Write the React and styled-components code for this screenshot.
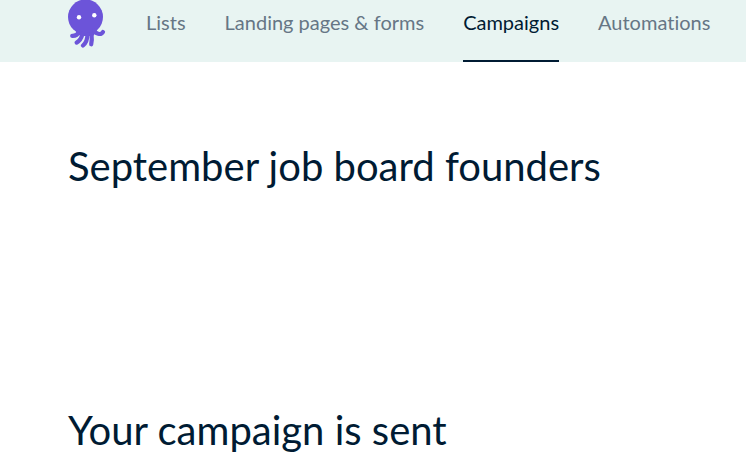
import React from 'react';
import styled, { createGlobalStyle } from 'styled-components';

const GlobalStyle = createGlobalStyle`
  * {
    box-sizing: border-box;
  }

  body {
    margin: 0;
    background: #ffffff;
    color: #001b33;
    font-family: Lato, 'Noto Sans', sans-serif;
    font-variant-ligatures: none;
  }
`;

const Header = styled.header`
  display: flex;
  align-items: flex-start;
  height: 62px;
  padding: 0 32px 0 68px;
  background: #e8f4f2;
  overflow: hidden;
`;

const LogoLink = styled.a`
  display: block;
  flex: none;
  width: 38px;
  height: 48px;
  margin-right: 40px;
`;

const Nav = styled.nav`
  display: flex;
  align-self: stretch;
  gap: 39px;
`;

const NavLink = styled.a`
  padding-top: 10px;
  border-bottom: 2px solid ${props => props.$active ? '#001b33' : 'transparent'};
  color: ${props => props.$active ? '#001b33' : '#667685'};
  font-size: 20px;
  line-height: 24px;
  text-decoration: none;
  white-space: nowrap;
`;

const Main = styled.main`
  display: flex;
  flex-direction: column;
  gap: 216px;
  padding: 80px 68px 0;
`;

const Title = styled.h1`
  margin: 0;
  font-size: 40px;
  font-weight: 400;
  line-height: 48px;
`;

const links = ['Lists', 'Landing pages & forms', 'Campaigns', 'Automations'];

const Logo = () => (
  <svg width="38" height="48" viewBox="0 0 38 48" aria-hidden="true">
    <circle cx="17.5" cy="17" r="17.5" fill="#6c54d9" />
    <path d="M7 29 H28 L27.5 33 L25 36 H13 L9 34 Z" fill="#6c54d9" />
    <g fill="none" stroke="#6c54d9" strokeWidth="4.2" strokeLinecap="round" strokeLinejoin="round">
      <path d="M11 32 C9.5 35 7 36 4.2 35.8" />
      <path d="M14.5 34 C13.5 38 11.500 41 8.600 42.600" />
      <path d="M19.500 34 C19.500 39 18 43 15 45.500" />
      <path d="M23.500 34 C24 38 24 41 23.200 44.300" />
      <path d="M26.500 30 C27 34 33 35.500 35 32" />
    </g>
    <circle cx="11" cy="17.3" r="2.2" fill="#ffffff" />
    <circle cx="26.3" cy="15.3" r="2.2" fill="#ffffff" />
  </svg>
);

const App = () => (
  <>
    <GlobalStyle />
    <Header>
      <LogoLink href="#" aria-label="Home">
        <Logo />
      </LogoLink>
      <Nav>
        {links.map(link => (
          <NavLink key={link} href="#" $active={link === 'Campaigns'}>
            {link}
          </NavLink>
        ))}
      </Nav>
    </Header>
    <Main>
      <Title>September job board founders</Title>
      <Title as="h2">Your campaign is sent</Title>
    </Main>
  </>
);

export default App;
